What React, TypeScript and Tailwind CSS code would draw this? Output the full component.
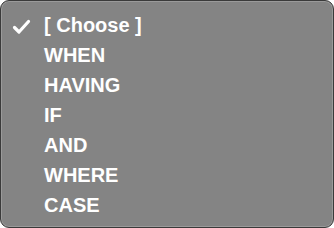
import React from 'react';

const items = ['[ Choose ]', 'WHEN', 'HAVING', 'IF', 'AND', 'WHERE', 'CASE'];

const Check: React.FC = () => (
  <svg width="19" height="16" viewBox="0 0 19 16" fill="none">
    <path d="M2.5 8.5 L7 13 L16.5 2.5" stroke="white" strokeWidth="3.2" strokeLinecap="round" strokeLinejoin="round" />
  </svg>
);

const App: React.FC = () => {
  return (
    <div className="w-[334px] h-[228px] bg-white">
      <div
        className="w-[334px] h-[228px] rounded-[9px] border border-[#3a3a3a] bg-[#848484] shadow-[inset_0_0_0_1px_rgba(255,255,255,0.18)] pt-[9px]"
        style={{ fontFamily: '"Liberation Sans", Arial, sans-serif' }}
      >
        <ul>
          {items.map((label, i) => (
            <li key={label} className="flex items-center h-[30px]">
              <div className="w-[43px] pl-[11px] pt-[3px] flex items-center">
                {i === 0 && <Check />}
              </div>
              <span className="text-[20px] leading-[30px] font-bold text-white">{label}</span>
            </li>
          ))}
        </ul>
      </div>
    </div>
  );
};

export default App;
